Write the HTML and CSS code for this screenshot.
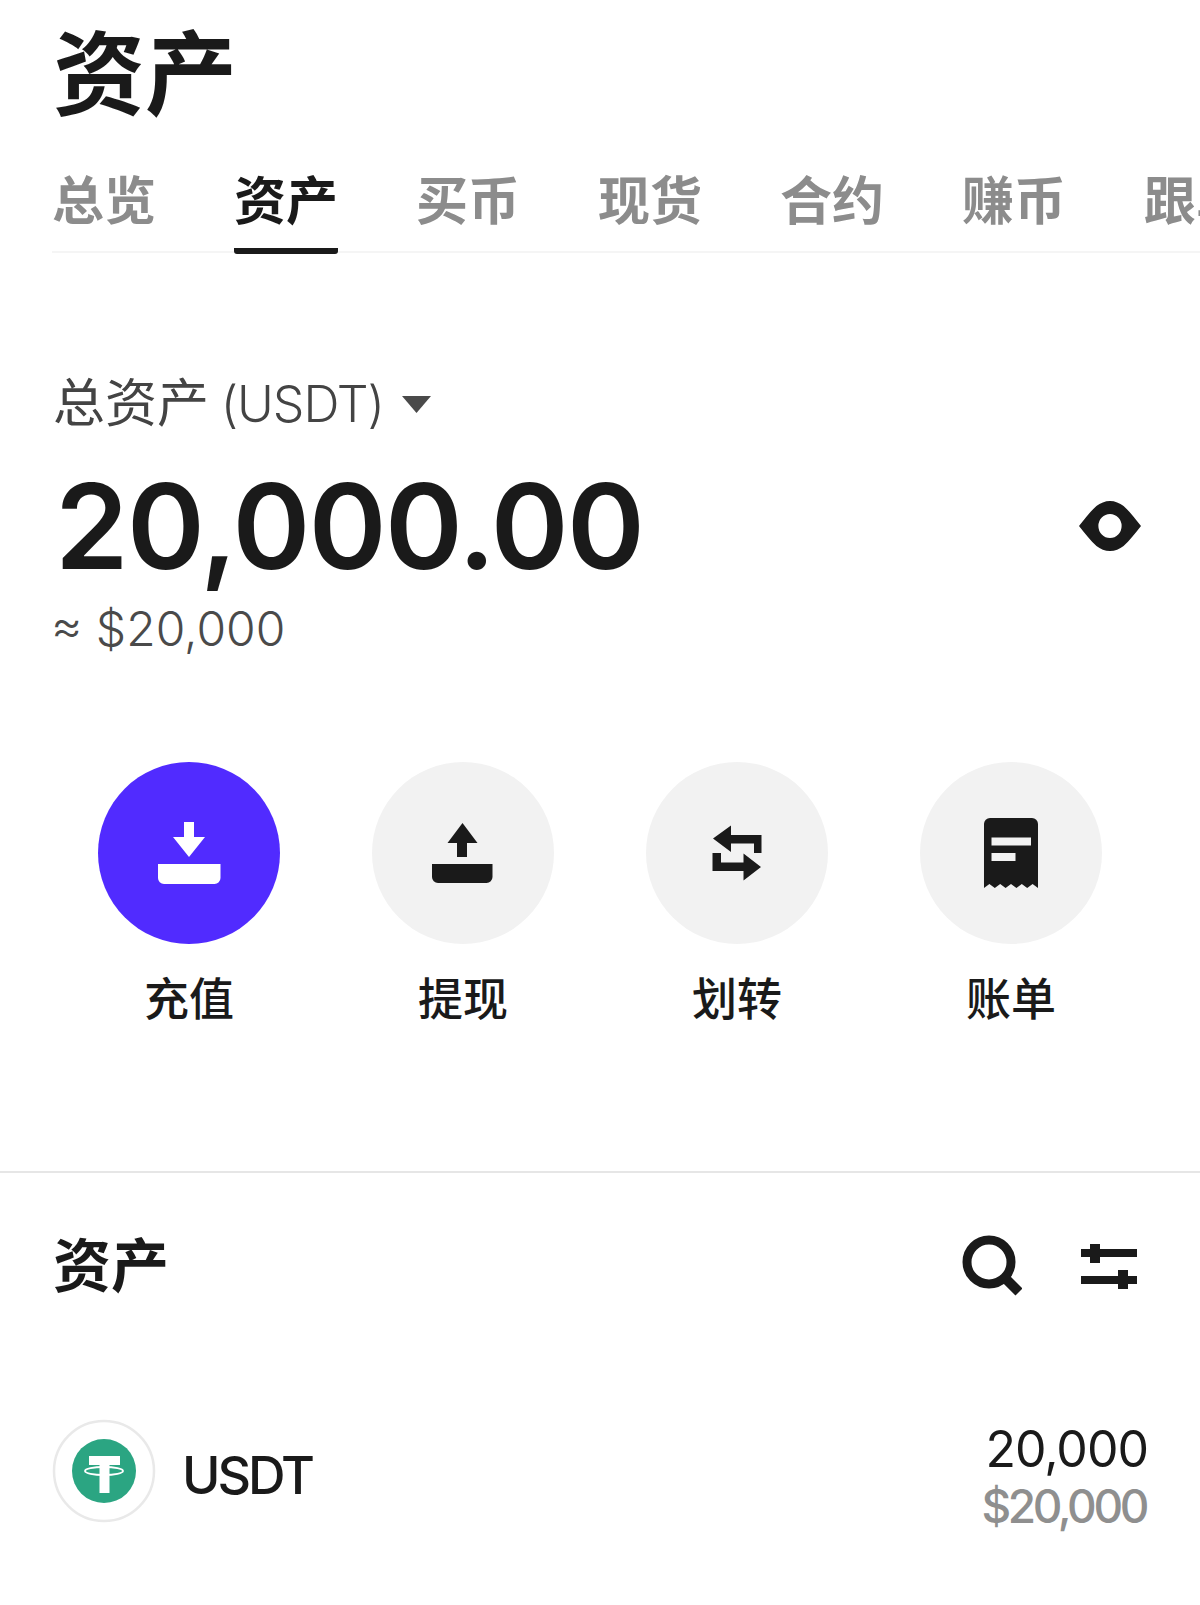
FILE: index.html
```html
<!DOCTYPE html>
<html lang="zh-CN">
<head>
    <meta charset="UTF-8">
    <meta name="viewport" content="width=device-width, initial-scale=1.0">
    <title>资产</title>
    <link rel="stylesheet" href="styles.css">
</head>
<body>

<h1 class="page-title">资产</h1>

<nav class="tabs">
    <a class="tab">总览</a>
    <a class="tab tab-active">资产</a>
    <a class="tab">买币</a>
    <a class="tab">现货</a>
    <a class="tab">合约</a>
    <a class="tab">赚币</a>
    <a class="tab">跟单</a>
</nav>

<section class="summary">
    <div class="summary-label">
        <span>总资产 <span class="summary-unit">(USDT)</span></span>
        <svg class="caret" width="30" height="18" viewBox="0 0 30 18"><path d="M0 1h29L14.500 18z" fill="#4a4a4a"/></svg>
    </div>
    <div class="summary-row">
        <div class="summary-amount">20,000.00</div>
        <svg class="eye" width="62" height="50" viewBox="0 0 64 50" preserveAspectRatio="none">
            <path fill-rule="evenodd" fill="#1a1a1a" d="M0 25 C6 18 12 10 18 5 C22 2 27 0 32 0 C37 0 42 2 46 5 C52 10 58 18 64 25 C58 32 52 40 46 45 C42 48 37 50 32 50 C27 50 22 48 18 45 C12 40 6 32 0 25z M32 13a12 12 0 1 0 0 24a12 12 0 1 0 0-24z"/>
        </svg>
    </div>
    <div class="summary-sub">≈ $20,000</div>
</section>

<section class="actions">
    <div class="action">
        <div class="action-circle action-primary">
            <svg width="182" height="182" viewBox="0 0 182 182" fill="#fff">
                <path d="M86 60h10v15h11L91 95 75 75h11z"/>
                <path d="M60 102h62.500v14a6 6 0 0 1-6 6H66a6 6 0 0 1-6-6z"/>
            </svg>
        </div>
        <span class="action-label">充值</span>
    </div>
    <div class="action">
        <div class="action-circle">
            <svg width="182" height="182" viewBox="0 0 182 182" fill="#1a1a1a">
                <path d="M90.500 61L105.500 81H95v14H85V81H75.500z"/>
                <path d="M60 102h60.500v13a6 6 0 0 1-6 6H66a6 6 0 0 1-6-6z"/>
            </svg>
        </div>
        <span class="action-label">提现</span>
    </div>
    <div class="action">
        <div class="action-circle">
            <svg width="182" height="182" viewBox="0 0 182 182" fill="#1a1a1a">
                <path d="M67 76.500L85 63.500V73h30.500v18H108V81.500H85V90z"/>
                <path d="M115 105L97.500 118.500V109H66.500V91H75v9.500h22.500V91.500z"/>
            </svg>
        </div>
        <span class="action-label">划转</span>
    </div>
    <div class="action">
        <div class="action-circle">
            <svg width="182" height="182" viewBox="0 0 182 182">
                <path fill="#1a1a1a" d="M64 62a6 6 0 0 1 6-6h42a6 6 0 0 1 6 6v64l-5.400-4-5.400 4-5.400-4-5.400 4-5.400-4-5.400 4-5.400-4-5.400 4-5.400-4-5.400 4z"/>
                <rect x="71.500" y="75.500" width="39.500" height="8" fill="#f2f2f2"/>
                <rect x="71.500" y="91" width="24" height="8" fill="#f2f2f2"/>
            </svg>
        </div>
        <span class="action-label">账单</span>
    </div>
</section>

<section class="assets">
    <div class="assets-head">
        <h2 class="assets-title">资产</h2>
        <div class="assets-tools">
            <svg width="64" height="64" viewBox="0 0 64 64" fill="none" stroke="#1a1a1a">
                <circle cx="31" cy="28" r="22" stroke-width="9"/>
                <path d="M47 44l14 14" stroke-width="10"/>
            </svg>
            <svg width="62" height="64" viewBox="0 0 62 64" fill="#1a1a1a">
                <rect x="3" y="15" width="56" height="8"/>
                <rect x="12" y="10" width="10" height="19"/>
                <rect x="3" y="42" width="56" height="8"/>
                <rect x="40" y="36" width="10" height="19"/>
            </svg>
        </div>
    </div>

    <div class="asset-row">
        <svg class="coin" width="104" height="104" viewBox="0 0 104 104">
            <circle cx="52" cy="52" r="50" fill="#fff" stroke="#e9e9e9" stroke-width="2.500"/>
            <circle cx="52" cy="52" r="32" fill="#2ba582"/>
            <path fill="#fff" d="M37 37h31v9H57.500v28h-10V46H37z"/>
            <ellipse cx="52" cy="52" rx="19" ry="4" fill="none" stroke="#fff" stroke-width="1.800"/>
        </svg>
        <span class="asset-name">USDT</span>
        <div class="asset-values">
            <div class="asset-qty">20,000</div>
            <div class="asset-usd">$20,000</div>
        </div>
    </div>
</section>

</body>
</html>
```

FILE: styles.css
```css
* {
    box-sizing: border-box;
}

body {
    margin: 0;
    background-color: #fff;
    color: #1a1a1a;
    font-family: Inter, "Noto Sans CJK SC", sans-serif;
    overflow-x: hidden;
}

.page-title {
    margin: 0;
    padding: 31px 0 0 53px;
    font-size: 92px;
    line-height: 88px;
    font-weight: 700;
}

.tabs {
    display: flex;
    gap: 78px;
    margin: 57px 0 0 52px;
    border-bottom: 2px solid #f5f5f5;
    overflow: visible;
    white-space: nowrap;
}

.tab {
    flex: none;
    height: 78px;
    margin-bottom: -3px;
    padding-bottom: 22px;
    border-bottom: 6px solid transparent;
    border-radius: 3px;
    font-size: 52px;
    line-height: 52px;
    font-weight: 700;
    color: #8c8c8c;
}

.tab-active {
    color: #1a1a1a;
    border-bottom-color: #1a1a1a;
}

.summary {
    padding: 125px 59px 0 53px;
}

.summary-label {
    display: flex;
    align-items: center;
    gap: 18px;
    font-size: 52px;
    line-height: 52px;
    color: #444;
}

.summary-unit {
    margin-left: -3px;
    font-weight: 300;
    font-size: 50px;
    letter-spacing: -1px;
}

.summary-row {
    display: flex;
    align-items: center;
    justify-content: space-between;
    margin-top: 36px;
}

.summary-amount {
    margin-left: 2px;
    font-size: 118px;
    line-height: 120px;
    font-weight: 600;
    letter-spacing: -1.600px;
}

.summary-sub {
    margin: 17px 0 0 -2px;
    font-size: 48px;
    line-height: 52px;
    font-weight: 300;
    color: #4a4a4a;
}

.actions {
    display: grid;
    grid-template-columns: repeat(4, 274px);
    padding: 107px 0 149px 52px;
    border-bottom: 2px solid #e6e6e6;
}

.action {
    display: flex;
    flex-direction: column;
    align-items: center;
    gap: 33px;
}

.action-circle {
    width: 182px;
    height: 182px;
    border-radius: 50%;
    background-color: #f2f2f2;
}

.action-primary {
    background-color: #512bff;
}

.action-circle svg {
    display: block;
}

.action-label {
    font-size: 45px;
    line-height: 45px;
    font-weight: 500;
}

.assets {
    padding: 61px 52px 0 53px;
}

.assets-head {
    display: flex;
    align-items: center;
    justify-content: space-between;
}

.assets-title {
    margin: 0;
    font-size: 58px;
    line-height: 64px;
    font-weight: 700;
}

.assets-tools {
    display: flex;
    gap: 56px;
    padding-right: 8px;
}

.asset-row {
    display: flex;
    align-items: center;
    gap: 26px;
    margin: 108px 0 0 -1px;
}

.asset-name {
    flex: 1;
    padding-top: 10px;
    font-size: 52px;
    font-weight: 500;
    letter-spacing: -3px;
}

.asset-values {
    padding-top: 15px;
    text-align: right;
    line-height: 57px;
}

.asset-qty {
    font-size: 50px;
    letter-spacing: -1px;
}

.asset-usd {
    margin-right: 2px;
    font-size: 46px;
    font-weight: 500;
    letter-spacing: -3.400px;
    color: #8f8f8f;
}
```
